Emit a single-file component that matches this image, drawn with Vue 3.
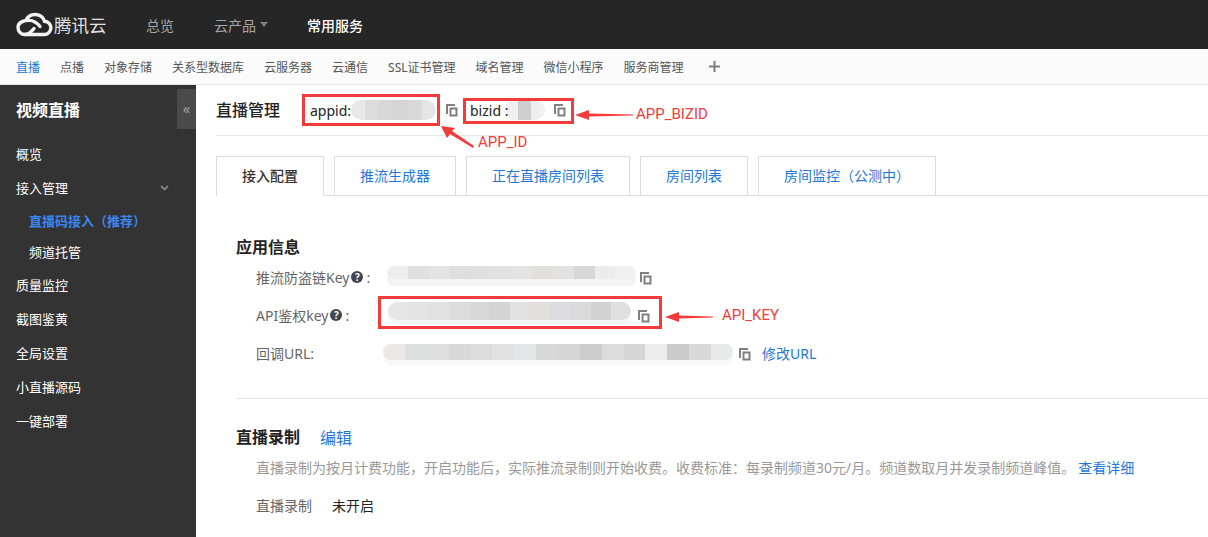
<script setup>
const subnav = ['点播', '对象存储', '关系型数据库', '云服务器', '云通信', 'SSL证书管理', '域名管理', '微信小程序', '服务商管理']
const tabs = ['推流生成器', '正在直播房间列表', '房间列表', '房间监控（公测中）']
const strip = (colors) => ({ background: `linear-gradient(90deg, ${colors.map((c, i) => `${c} ${i * 100 / colors.length}% ${(i + 1) * 100 / colors.length}%`).join(', ')})` })
const blurAppid = strip(['#e8e8e8', '#dcdcdc', '#d8d8d8', '#d6d6d6', '#d9d9d9', '#e4e5e7'])
const blurBizid = strip(['#f0f0f0', '#f0f0f0', '#cfcfcf', '#cfcfcf', '#eeeeee', '#f0f0f0'])
const blurPush = strip(['#eeeeee', '#e0e0e0', '#e4e4e4', '#dedede', '#e0e0e0', '#e2e2e2', '#e4e4e4', '#e0dfdd', '#e2e2e2', '#d8d8d8', '#ececec', '#f0f0f0'])
const blurApi = strip(['#e6e6e6', '#e4e4e4', '#e2e2e2', '#dcdcdc', '#d8d8d8', '#d4d4d4', '#e2e2e2', '#e2e0dc', '#dcdde0', '#dadada', '#d2d2d2', '#e0e0e0'])
const blurUrl = strip(['#ece8e8', '#dde0de', '#dedede', '#d8d8d8', '#dcdcdc', '#e2e2e2', '#e2e6e6', '#d8d8d8', '#d6d6d6', '#cdcdcd', '#dcdcdc', '#d6d6d6', '#ececec', '#cccccc', '#d8d8d8', '#e8eaea'])
</script>

<template>
  <div class="page">
    <header class="top">
      <div class="logo">
        <svg class="cloud" width="37" height="26" viewBox="0 0 37 26" fill="none" stroke="#f2f2f2" stroke-width="3.4" stroke-linecap="round">
          <path d="M9 23.500h19a6.600 6.600 0 0 0 .6-13.200A10 10 0 0 0 10 9.400" />
          <path d="M24 15.500C21 12 18 9.400 13.500 9.400 8 9.400 2 11 2 16.500 2 20.500 5 23.500 9 23.500c5 0 7-4 9-6" />
        </svg>
        <span class="logo-text">腾讯云</span>
      </div>
      <nav class="top-nav">
        <span class="overview">总览</span>
        <span class="products">云产品<i class="tri"></i></span>
        <span class="common">常用服务</span>
      </nav>
    </header>

    <div class="subnav">
      <span class="sub-active">直播</span>
      <span v-for="s in subnav" :key="s">{{ s }}</span>
      <svg class="plus" width="11" height="11" viewBox="0 0 11 11"><path d="M4.500 0h2v4.500H11v2H6.500V11h-2V6.500H0v-2h4.500z" fill="#808080" /></svg>
    </div>

    <div class="body">
      <aside class="side">
        <div class="side-title">视频直播</div>
        <div class="collapse">«</div>
        <ul class="menu">
          <li>概览</li>
          <li class="has-sub">接入管理
            <svg class="chev" width="9" height="6" viewBox="0 0 9 6" fill="none"><path d="M1 1l3.500 3.500L8 1" stroke="#808080" stroke-width="1.800" /></svg>
          </li>
          <li class="child child-active">直播码接入（推荐）</li>
          <li class="child child-last">频道托管</li>
          <li>质量监控</li>
          <li>截图鉴黄</li>
          <li>全局设置</li>
          <li>小直播源码</li>
          <li>一键部署</li>
        </ul>
      </aside>

      <main class="main">
        <div class="head">
          <h1>直播管理</h1>
          <span class="id-appid">appid:</span>
          <span class="blur blur-appid" :style="blurAppid"></span>
          <svg class="copy copy-a" width="12" height="13" viewBox="0 0 12 13"><path d="M0 0h9v2H2v8H0zM3.500 3.500h8v9h-8z" fill="#808080" fill-rule="evenodd" /><path d="M5.500 5.500h4v5h-4z" fill="#fff" /></svg>
          <span class="id-bizid">bizid :</span>
          <span class="blur blur-bizid" :style="blurBizid"></span>
          <svg class="copy copy-b" width="12" height="13" viewBox="0 0 12 13"><path d="M0 0h9v2H2v8H0zM3.500 3.500h8v9h-8z" fill="#808080" fill-rule="evenodd" /><path d="M5.500 5.500h4v5h-4z" fill="#fff" /></svg>
        </div>

        <div class="tabs">
          <span class="tab tab-active">接入配置</span>
          <span v-for="t in tabs" :key="t" class="tab">{{ t }}</span>
        </div>

        <section class="sec-info">
          <h2>应用信息</h2>
          <div class="row row-push">
            <span class="label">推流防盗链Key<i class="q">?</i>:</span>
            <span class="blur blur-push" :style="blurPush"></span>
            <svg class="copy" width="12" height="13" viewBox="0 0 12 13"><path d="M0 0h9v2H2v8H0zM3.500 3.500h8v9h-8z" fill="#808080" fill-rule="evenodd" /><path d="M5.500 5.500h4v5h-4z" fill="#fff" /></svg>
          </div>
          <div class="row row-api">
            <span class="label">API鉴权key<i class="q">?</i>:</span>
            <span class="blur blur-api" :style="blurApi"></span>
            <svg class="copy" width="12" height="13" viewBox="0 0 12 13"><path d="M0 0h9v2H2v8H0zM3.500 3.500h8v9h-8z" fill="#808080" fill-rule="evenodd" /><path d="M5.500 5.500h4v5h-4z" fill="#fff" /></svg>
          </div>
          <div class="row row-url">
            <span class="label">回调URL:</span>
            <span class="blur blur-url" :style="blurUrl"></span>
            <svg class="copy" width="12" height="13" viewBox="0 0 12 13"><path d="M0 0h9v2H2v8H0zM3.500 3.500h8v9h-8z" fill="#808080" fill-rule="evenodd" /><path d="M5.500 5.500h4v5h-4z" fill="#fff" /></svg>
            <span class="link edit-url">修改URL</span>
          </div>
        </section>

        <section class="sec-rec">
          <div class="rec-head"><h2>直播录制</h2><span class="link rec-edit">编辑</span></div>
          <p class="desc">直播录制为按月计费功能，开启功能后，实际推流录制则开始收费。收费标准：每录制频道30元/月。频道数取月并发录制频道峰值。<span class="link detail">查看详细</span></p>
          <div class="status"><span class="status-k">直播录制</span><span class="status-v">未开启</span></div>
        </section>
      </main>
    </div>

    <div class="mark mark-appid"></div>
    <div class="mark mark-bizid"></div>
    <div class="mark mark-api"></div>
    <svg class="arrows" width="1208" height="537" viewBox="0 0 1208 537">
      <path d="M441 126l14 2-3 3 22 15-1 2-23-14-3 4z" fill="#f33b3b" />
      <path d="M575 115l14-5v3.500l44 1v1l-44 1v3.500z" fill="#f33b3b" />
      <path d="M665 317l14-5v3.500l34 1v1l-34 1v3.500z" fill="#f33b3b" />
    </svg>
    <span class="note note-appid">APP_ID</span>
    <span class="note note-bizid">APP_BIZID</span>
    <span class="note note-api">API_KEY</span>
  </div>
</template>

<style>
html, body { margin: 0; background: #fff; }
</style>

<style scoped>
.page {
  position: relative;
  width: 1208px;
  height: 537px;
  overflow: hidden;
  font-family: "Noto Sans", "Noto Sans CJK SC", sans-serif;
  font-size: 14px;
  color: #333;
  background: #fff;
}
h1, h2, p, ul { margin: 0; padding: 0; }
ul { list-style: none; }
i { font-style: normal; }

.top { height: 49px; background: #262626; display: flex; align-items: center; }
.logo { display: flex; align-items: center; margin-left: 16px; width: 130px; }
.cloud { flex: none; margin-top: -1px; }
.logo-text { font-size: 17.500px; color: #e0e0e0; margin-left: 1px; line-height: 24px; }
.top-nav { display: flex; align-items: center; font-size: 14px; color: #a6a6a6; }
.overview { width: 68px; }
.products { width: 93px; display: flex; align-items: center; }
.tri { width: 0; height: 0; margin-left: 4px; border: 4px solid transparent; border-top: 5px solid #808080; border-bottom: 0; }
.common { color: #fff; font-weight: 500; }

.subnav {
  height: 35px;
  background: #fbfbfb;
  border-bottom: 1px solid #e6e6e6;
  display: flex;
  align-items: center;
  gap: 20px;
  padding-left: 16px;
  font-size: 12px;
  color: #555;
}
.sub-active { color: #2277da; }
.plus { margin-left: 5px; }

.body { display: flex; height: 452px; }
.side { position: relative; width: 196px; flex: none; background: #333; color: #fff; }
.side-title { font-size: 16px; font-weight: 700; line-height: 22px; padding: 14px 0 0 16px; }
.collapse {
  position: absolute;
  right: 0;
  top: 4px;
  width: 19px;
  height: 40px;
  background: #4a4a4a;
  color: #a0a0a0;
  font-size: 15px;
  line-height: 38px;
  text-align: center;
}
.menu { margin-top: 16px; }
.menu li { position: relative; height: 34px; line-height: 34px; padding-left: 16px; font-size: 13px; }
.menu .child { height: 32px; line-height: 32px; padding-left: 29px; }
.menu .child-last { height: 31px; line-height: 31px; }
.menu .child-active { color: #3b86f0; font-weight: 700; }
.chev { position: absolute; left: 160px; top: 14px; }

.main { flex: 1; min-width: 0; padding-left: 20px; }
.head { height: 50px; border-bottom: 1px solid #e6e6e6; display: flex; align-items: center; }
.head h1 { font-size: 16px; font-weight: 500; color: #222; width: 94px; line-height: 50px; }
.id-appid { color: #222; width: 41px; }
.id-bizid { color: #222; margin-left: 12px; width: 34px; white-space: nowrap; position: relative; z-index: 1; }
.blur { display: block; flex: none; border-radius: 10px; }
.blur-appid { width: 85px; height: 20px; }
.blur-bizid { width: 41px; height: 20px; }
.copy { display: block; flex: none; }
.copy-a { margin-left: 10px; }
.copy-b { margin-left: 9px; }

.tabs { display: flex; gap: 10px; margin-top: 20px; height: 39px; border-bottom: 1px solid #dcdcdc; }
.tab {
  height: 39px;
  box-sizing: border-box;
  padding: 0 25px;
  line-height: 38px;
  border: 1px solid #dcdcdc;
  border-bottom: 0;
  color: #2277da;
  font-size: 14px;
  background: #fff;
}
.tab-active { height: 40px; color: #333; font-weight: 500; }

.sec-info { margin-left: 20px; height: 202px; border-bottom: 1px solid #e6e6e6; }
.sec-info h2, .rec-head h2 { font-size: 16px; font-weight: 700; color: #222; line-height: 22px; }
.sec-info h2 { padding-top: 40px; }
.row { display: flex; align-items: center; height: 38px; padding-left: 20px; color: #666; }
.label { display: flex; align-items: center; white-space: nowrap; width: 131px; }
.q {
  width: 12px;
  height: 12px;
  margin: 0 3px 0 2px;
  border-radius: 50%;
  background: #3f4650;
  color: #fff;
  font-size: 10px;
  font-weight: 700;
  line-height: 12px;
  text-align: center;
}
.row-push .blur { width: 249px; height: 13px; margin: 0 4px 9px 0; box-shadow: 0 7px 0 #f3f3f3; }
.row-api .label { width: 132px; }
.row-api .blur { width: 243px; height: 18px; margin: 0 7px 8px 0; box-shadow: 0 4px 0 #f5f5f5; }
.row-url .label { width: 127px; }
.row-url .blur { width: 350px; height: 16px; margin: 0 6px 2px 0; box-shadow: 0 6px 0 #f9f9f9; }
.row .copy { margin-top: 3px; }
.link { color: #2277da; }
.edit-url { margin-left: 11px; font-size: 14px; }

.sec-rec { margin-left: 20px; padding-top: 27px; }
.rec-head { display: flex; align-items: center; height: 22px; }
.rec-edit { margin-left: 20px; font-size: 16px; }
.desc { margin: 10px 0 0 20px; font-size: 14px; line-height: 20px; color: #999; white-space: nowrap; }
.detail { margin-left: 3px; font-size: 14px; }
.status { margin: 18px 0 0 20px; line-height: 20px; font-size: 14px; }
.status-k { color: #666; display: inline-block; width: 76px; }
.status-v { color: #222; }

.mark { position: absolute; box-sizing: border-box; border: 3px solid #f33b3b; }
.mark-appid { left: 302px; top: 94px; width: 138px; height: 32px; }
.mark-bizid { left: 463px; top: 98px; width: 111px; height: 26px; }
.mark-api { left: 378px; top: 296px; width: 284px; height: 33px; }
.arrows { position: absolute; left: 0; top: 0; pointer-events: none; }
.note { position: absolute; font-family: Roboto, sans-serif; font-size: 15px; line-height: 18px; color: #f33b3b; }
.note-appid { left: 478px; top: 133px; }
.note-bizid { left: 636px; top: 105px; }
.note-api { left: 722px; top: 306px; }
</style>
